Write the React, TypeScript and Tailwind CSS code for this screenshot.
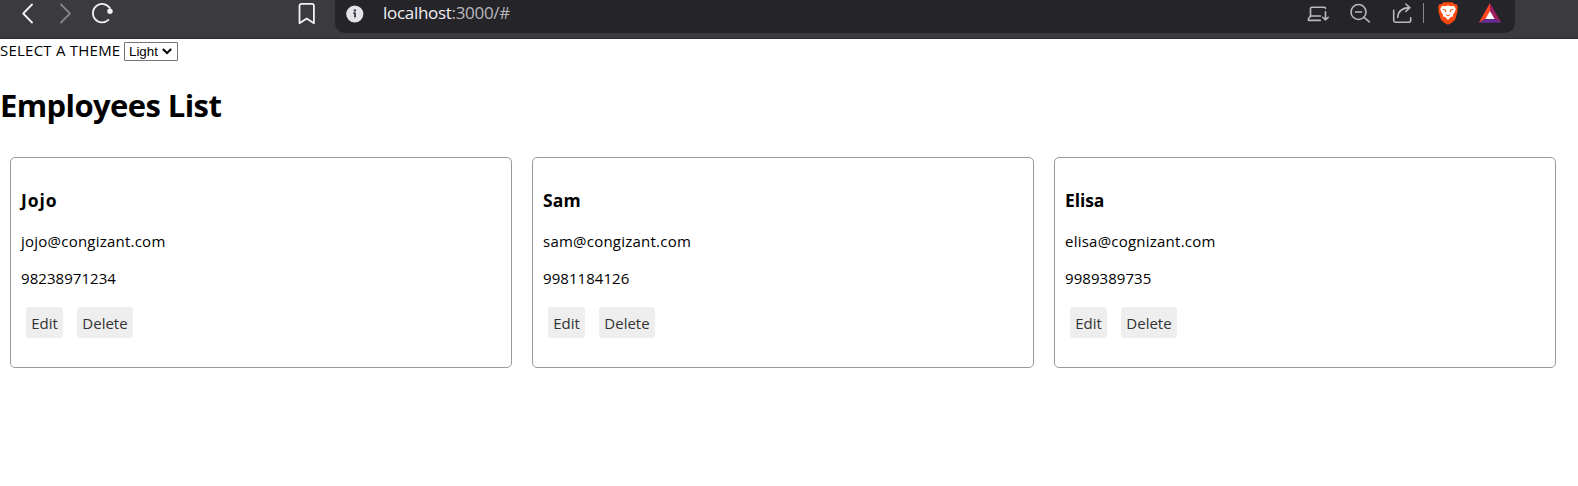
import { ReactNode, useState } from "react";

type Employee = { name: string; email: string; phone: string; nameSpacing: string };

const employees: Employee[] = [
  { name: "Jojo", email: "jojo@congizant.com", phone: "98238971234", nameSpacing: "tracking-[0.9px]" },
  { name: "Sam", email: "sam@congizant.com", phone: "9981184126", nameSpacing: "tracking-[0.1px]" },
  { name: "Elisa", email: "elisa@cognizant.com", phone: "9989389735", nameSpacing: "tracking-[-0.1px]" },
];

function Icon({ className, children }: { className: string; children: ReactNode }) {
  return (
    <svg
      viewBox="0 0 24 28"
      fill="none"
      stroke="currentColor"
      strokeWidth="1.8"
      strokeLinecap="round"
      strokeLinejoin="round"
      className={`h-7 w-6 shrink-0 ${className}`}
    >
      {children}
    </svg>
  );
}

function BrowserBar() {
  return (
    <header className="flex h-[39px] items-start border-b border-[#2e2a35] bg-[#3b3a3f] text-[#f2f1f5]">
      <Icon className="ml-4">
        <path d="M16 4.5 7.2 13.5 16 22.5" />
      </Icon>
      <Icon className="ml-3.5 text-[#85848a]">
        <path d="M7 4.5 16 13.5 7 22.5" />
      </Icon>
      <Icon className="ml-3">
        <path d="M18.4 19.9A9.2 9.2 0 1 1 19.8 8.1" />
        <circle cx="20" cy="11.3" r="2.7" fill="currentColor" stroke="none" />
      </Icon>
      <Icon className="ml-[181px]">
        <path d="M6.5 3.8h10.4a2 2 0 0 1 2 2v17.4l-7.2-4.6-7.2 4.6V5.8a2 2 0 0 1 2-2Z" />
      </Icon>
      <div className="ml-4 flex h-[33px] w-[1180px] items-start rounded-b-[10px] bg-[#242429] pr-[13px] pl-2 text-[#b9b8be]">
        <Icon className="text-[#e4e3e9]">
          <circle cx="11.8" cy="14" r="8.6" fill="currentColor" stroke="none" />
          <path d="M10.3 13.2h1.7v4.3" stroke="#3b3a40" strokeLinecap="butt" />
          <circle cx="11.9" cy="10.4" r="1.2" fill="#3b3a40" stroke="none" />
        </Icon>
        <div className="ml-4 text-[17px] leading-[25px] tracking-[-0.3px] whitespace-nowrap">
          <span className="text-[#f0eff4]">localhost</span>
          <span>:3000/#</span>
        </div>
        <Icon className="ml-auto">
          <path
            d="M4.5 16.500V8.500a1.300 1.300 0 0 1 1.300-1.300h12.400a1.300 1.300 0 0 1 1.300 1.300M4.500 16h10M4.500 16l-2 2.700v1.700h11.800M19.500 11.800v8.200M16.800 17.300l2.700 2.700 2.700-2.700"
            strokeWidth="1.6"
          />
        </Icon>
        <Icon className="ml-[18px]">
          <circle cx="10.500" cy="12" r="7.500" strokeWidth="1.600" />
          <path d="M7.500 12h6M16 17.300l5.300 4.500" strokeWidth="1.600" />
        </Icon>
        <Icon className="ml-[18px]">
          <path
            d="M3.700 10.300v10a2 2 0 0 0 2 2h13a2 2 0 0 0 2-2v-2.500M7.700 17.500c.3-6 3.800-9.600 12-9.900M15.800 4l4 3.600-4 3.900"
            strokeWidth="1.600"
          />
        </Icon>
        <span className="mt-[3px] ml-[9px] h-5 w-px bg-[#8a898f]" />
        <Icon className="ml-3">
          <path
            d="M7.500 2.300h9l1.900 2 2-.2 1.500 2.900-.6 1.600.5 1.600-2.400 8.800c-.5 1.500-5 4.700-7.400 5.800-2.400-1.100-6.900-4.300-7.400-5.800L2.200 10.200l.5-1.600-.6-1.600 1.500-2.900 2 .2Z"
            fill="#fb4a12"
            stroke="none"
          />
          <path
            d="m6.300 5.800 2.500.5L12 5.600l3.200.7 2.500-.5 2.100 2.700-.8 3.200-2.200 3 .4 1.700-2.700.6-1 1.500L12 20l-1.500-1.500-1-1.500-2.700-.6.4-1.700-2.200-3-.8-3.200Z"
            fill="#fff"
            stroke="none"
          />
          <path d="m7 9.500 2.800.6-.3 1.700M17 9.500l-2.800.6.3 1.700M10.300 14.800l1.700 1.100 1.700-1.100" stroke="#fb4a12" strokeWidth="1" />
        </Icon>
        <Icon className="ml-[18px]">
          <path d="M12 3 .8 22.700l7.300-4.200L12 11.800Z" fill="#ff4724" stroke="none" />
          <path d="m12 3 11.300 19.700-7.400-4.200L12 11.800Z" fill="#9e1f63" stroke="none" />
          <path d="m.8 22.700 7.300-4.200h7.800l7.400 4.200Z" fill="#662d91" stroke="none" />
          <path d="m12 11-4.600 7.900h9.200Z" fill="#fff" stroke="none" />
        </Icon>
      </div>
    </header>
  );
}

function ThemePicker() {
  const [theme, setTheme] = useState("Light");
  return (
    <label className="flex h-6 items-start">
      <span className="w-[124px] text-[15px] leading-[23px] tracking-[0.23px] whitespace-nowrap">SELECT A THEME</span>
      <span className="relative mt-[3px]">
        <select
          value={theme}
          onChange={(e) => setTheme(e.target.value)}
          className="block h-[19px] w-[54px] appearance-none rounded-[1px] border border-[#767676] bg-white pl-1 font-['Liberation_Sans',sans-serif] text-[13.333px] leading-[17px]"
        >
          <option>Light</option>
          <option>Dark</option>
        </select>
        <svg
          viewBox="0 0 12 8"
          className="pointer-events-none absolute top-[5px] left-[37px] h-2 w-3"
          fill="none"
          stroke="#000"
          strokeWidth="2"
        >
          <path d="m1.800 2 4.200 4 4.200-4" />
        </svg>
      </span>
    </label>
  );
}

function EmployeeCard({ name, email, phone, nameSpacing }: Employee) {
  return (
    <article className="h-[211px] w-[502px] rounded-[5px] border border-[#999] px-2.5 pt-[30px]">
      <h3 className={`text-[17.5px] leading-[25px] font-bold ${nameSpacing}`}>{name}</h3>
      <p className="mt-[18px] text-[15px] leading-[21px] tracking-[0.23px]">{email}</p>
      <p className="mt-4 text-[15px] leading-[21px] tracking-[0.05px]">{phone}</p>
      <div className="mt-[18px] flex gap-3.5 pl-[5px] text-[15px] leading-[32px] text-[#333]">
        <button className="h-[31px] w-[37px] rounded-[3px] bg-[#eee] text-center">Edit</button>
        <button className="h-[31px] w-14 rounded-[3px] bg-[#eee] text-center">Delete</button>
      </div>
    </article>
  );
}

export default function App() {
  return (
    <div className="min-h-screen bg-white font-['Open_Sans',sans-serif] text-black">
      <BrowserBar />
      <main>
        <ThemePicker />
        <h1 className="mt-[21px] text-[31px] leading-[43px] font-bold tracking-[-0.6px]">Employees List</h1>
        <section className="mt-[30px] flex gap-5 pl-2.5">
          {employees.map((employee) => (
            <EmployeeCard key={employee.name} {...employee} />
          ))}
        </section>
      </main>
    </div>
  );
}
